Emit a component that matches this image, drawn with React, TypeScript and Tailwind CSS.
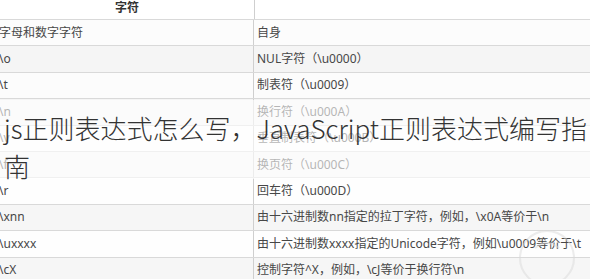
const ROWS = [
  { k: "字母和数字字符", v: "自身", bg: "bg-[#fcfcfc]" },
  { k: "\\o", v: "NUL字符（\\u0000）", bg: "bg-[#f5f5f5]" },
  { k: "\\t", v: "制表符（\\u0009）", bg: "bg-[#fcfcfc]" },
  { k: "\\n", v: "换行符（\\u000A）", bg: "bg-[#f5f5f5]" },
  { k: "\\v", v: "垂直制表符（\\u000B）", bg: "bg-[#fcfcfc]" },
  { k: "\\f", v: "换页符（\\u000C）", bg: "bg-[#f5f5f5]" },
  { k: "\\r", v: "回车符（\\u000D）", bg: "bg-[#fefefe]" },
  { k: "\\xnn", v: "由十六进制数nn指定的拉丁字符，例如，\\x0A等价于\\n", bg: "bg-[#f6f6f6]" },
  { k: "\\uxxxx", v: "由十六进制数xxxx指定的Unicode字符，例如\\u0009等价于\\t", bg: "bg-[#fefefe]" },
  { k: "\\cX", v: "控制字符^X，例如，\\cJ等价于换行符\\n", bg: "bg-[#f6f6f6]" },
];

export default function App() {
  return (
    <div
      className="relative w-[590px] h-[279px] overflow-hidden bg-white text-[#474747]"
      style={{ fontFamily: '"Noto Sans", "Noto Sans CJK SC", sans-serif' }}
    >
      {/* table */}
      <div className="flex flex-col">
        <div className="flex h-[20px] border-b border-[#d9d9d9] bg-white">
          <div className="w-[255px] shrink-0 flex items-start justify-center text-[12px] leading-[16px] font-bold text-[#333] border-r border-[#cfcfcf]">
            字符
          </div>
          <div className="flex-1" />
        </div>
        {ROWS.map((r) => (
          <div key={r.k} className={`flex h-[26.4px] border-b border-[#d9d9d9] ${r.bg} text-[12px]`}>
            <div className="w-[255px] shrink-0 flex items-center -ml-[1px] border-r border-[#cfcfcf] whitespace-nowrap">
              {r.k}
            </div>
            <div className="flex-1 flex items-center pl-[3px] whitespace-nowrap">{r.v}</div>
          </div>
        ))}
      </div>

      {/* faint watermark */}
      <svg className="absolute left-[505px] top-[218px]" width="80" height="70" viewBox="0 0 80 70">
        <circle cx="42" cy="40" r="27" fill="none" stroke="#dadada" strokeWidth="2" opacity="0.5" />
        <path d="M30 30 q12 -10 24 0" fill="none" stroke="#dadada" strokeWidth="2" opacity="0.5" />
      </svg>

      {/* title overlay */}
      <div className="absolute left-0 top-[100px] w-full h-[79px] bg-white/60" />
      <div
        className="absolute left-[4px] top-[109px] w-[586px] text-[26px] leading-[38px] font-light text-[#333]"
        style={{ fontFamily: '"Noto Sans CJK SC", "Noto Sans", sans-serif' }}
      >
        js正则表达式怎么写，JavaScript正则表达式编写指南
      </div>
    </div>
  );
}
